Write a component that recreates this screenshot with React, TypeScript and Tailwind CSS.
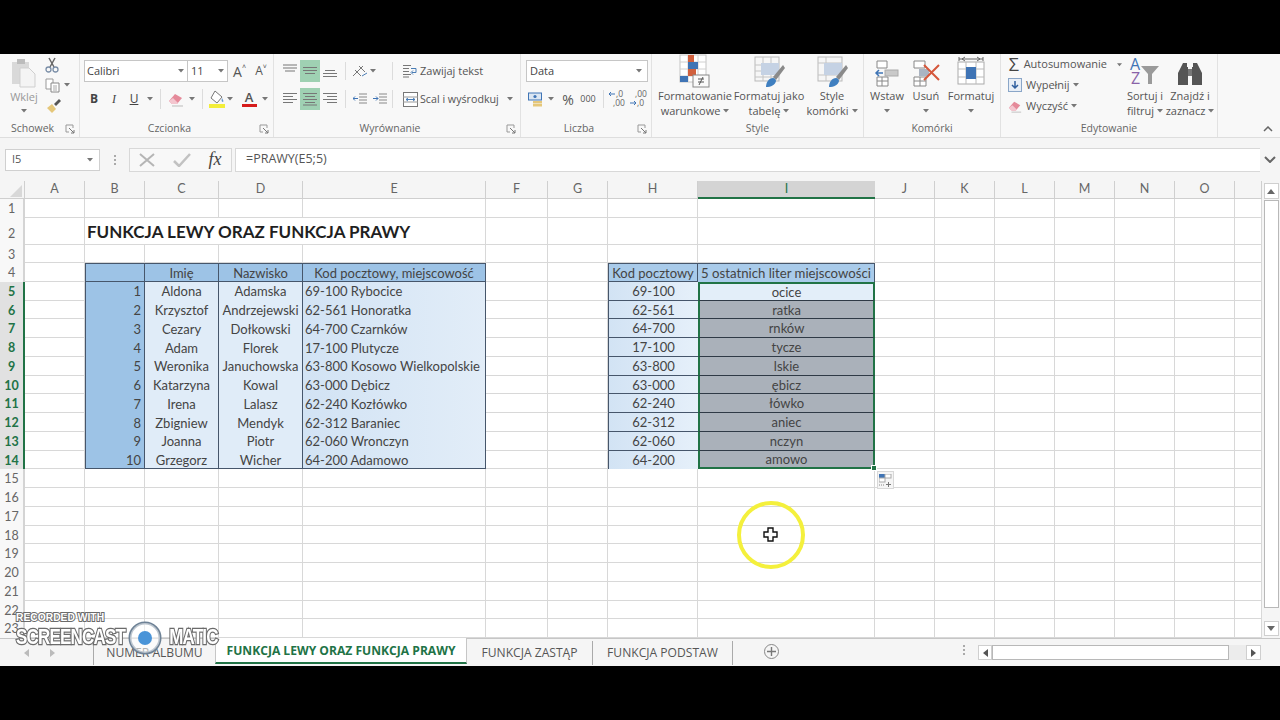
import type { ReactNode } from "react";

const gridCols =
  "grid-cols-[25px_60px_60px_74px_84px_183px_62px_60px_90px_177px_60px_60px_60px_60px_60px_60px_27px]";
const colNames = ["", "A", "B", "C", "D", "E", "F", "G", "H", "I", "J", "K", "L", "M", "N", "O", ""];

const people = [
  ["1", "Aldona", "Adamska", "69-100 Rybocice"],
  ["2", "Krzysztof", "Andrzejewski", "62-561 Honoratka"],
  ["3", "Cezary", "Dołkowski", "64-700 Czarnków"],
  ["4", "Adam", "Florek", "17-100 Plutycze"],
  ["5", "Weronika", "Januchowska", "63-800 Kosowo Wielkopolskie"],
  ["6", "Katarzyna", "Kowal", "63-000 Dębicz"],
  ["7", "Irena", "Lalasz", "62-240 Kozłówko"],
  ["8", "Zbigniew", "Mendyk", "62-312 Baraniec"],
  ["9", "Joanna", "Piotr", "62-060 Wronczyn"],
  ["10", "Grzegorz", "Wicher", "64-200 Adamowo"],
];
const codes = [
  ["69-100", "ocice"],
  ["62-561", "ratka"],
  ["64-700", "rnków"],
  ["17-100", "tycze"],
  ["63-800", "lskie"],
  ["63-000", "ębicz"],
  ["62-240", "łówko"],
  ["62-312", "aniec"],
  ["62-060", "nczyn"],
  ["64-200", "amowo"],
];

const plain = "border-r border-b border-[#d8d8d8] bg-white";
const dark = "border-[#46566b]";

function Caret({ className = "" }: { className?: string }) {
  return (
    <svg width="6" height="4" viewBox="0 0 6 4" className={className}>
      <path d="M0 0h6L3 3.5z" fill="#777" />
    </svg>
  );
}

function Launcher() {
  return (
    <svg width="10" height="10" viewBox="0 0 10 10">
      <path d="M1 1h7v3M1 1v7h3" fill="none" stroke="#999" />
      <path d="M4 4l5 5M9 6v3H6" fill="none" stroke="#777" />
    </svg>
  );
}

function Sep({ className = "h-[22px]" }: { className?: string }) {
  return <div className={`w-px bg-[#dcdcdc] ${className}`} />;
}

function Lines({ kind }: { kind: string }) {
  const rows: Record<string, string> = {
    top: "M0 1h14M0 4h14M2 7h10",
    mid: "M0 3.5h14M0 6.5h14M2 9.5h10",
    bottom: "M2 6.5h10M0 9.5h14M0 12.5h14",
    left: "M0 1.5h14M0 4.5h10M0 7.5h14M0 10.5h10",
    center: "M0 1.5h14M2 4.5h10M0 7.5h14M2 10.5h10M0 13h14",
    right: "M0 1.5h14M4 4.5h10M0 7.5h14M4 10.5h10",
  };
  return (
    <svg width="14" height="14" viewBox="0 0 14 14">
      <path d={rows[kind]} stroke="#777" fill="none" />
    </svg>
  );
}

function Slot({ className, children }: { className: string; children?: ReactNode }) {
  return <div className={`flex items-center justify-center ${className}`}>{children}</div>;
}

function Group({
  w,
  label,
  launcher,
  children,
}: {
  w: string;
  label: string;
  launcher?: boolean;
  children: ReactNode;
}) {
  return (
    <div className={`flex flex-col shrink-0 border-r border-[#e2e2e2] ${w}`}>
      <div className="h-[66px]">{children}</div>
      <div className="flex items-center h-[17px] pt-[1px] text-[10.5px] text-[#666]">
        <span className="flex-1 text-center">{label}</span>
        {launcher && (
          <span className="w-[14px] flex">
            <Launcher />
          </span>
        )}
      </div>
    </div>
  );
}

function Paste() {
  return (
    <svg width="26" height="30" viewBox="0 0 26 30">
      <rect x="1" y="4" width="17" height="22" fill="#d9d9d9" />
      <rect x="6" y="1" width="8" height="5" fill="#bcbcbc" />
      <path d="M9 10h9l6 6v13H9z" fill="#f4f4f4" stroke="#cfcfcf" />
    </svg>
  );
}

function Scissors() {
  return (
    <svg width="16" height="16" viewBox="0 0 16 16">
      <path d="M5 1l5 9M11 1L6 10" stroke="#666" strokeWidth="1.5" fill="none" />
      <circle cx="4.5" cy="12.5" r="2.5" fill="none" stroke="#7b8fa8" strokeWidth="1.3" />
      <circle cx="11.5" cy="12.5" r="2.5" fill="none" stroke="#7b8fa8" strokeWidth="1.3" />
    </svg>
  );
}

function Copy() {
  return (
    <svg width="15" height="15" viewBox="0 0 15 15">
      <path d="M1 1h7v10H1z" fill="#fff" stroke="#999" />
      <path d="M6 5h8v9H6z" fill="#fff" stroke="#888" />
      <path d="M8 8h4M8 10h4M8 12h4" stroke="#aaa" />
    </svg>
  );
}

function Brush() {
  return (
    <svg width="16" height="16" viewBox="0 0 16 16">
      <path d="M1 10l5-4 4 5-4 4z" fill="#e5c77a" />
      <path d="M8 6l5-5 2 2-5 5z" fill="#555" />
    </svg>
  );
}

function Eraser({ size = 16 }: { size?: number }) {
  return (
    <svg width={size} height={size} viewBox="0 0 16 16">
      <path d="M1 10l6-7 7 4-5 6H4z" fill="#e58a9a" />
      <path d="M1 10l3 3h5l1-1-5-5z" fill="#f4c6cf" />
      <path d="M4 15h11" stroke="#bbb" />
    </svg>
  );
}

function FillColor() {
  return (
    <svg width="16" height="18" viewBox="0 0 16 18">
      <path d="M6 1l7 6-5 6-6-5z" fill="#fff" stroke="#777" />
      <path d="M13 8c1 2 2 3 1 4-1 0-2-1-1-4z" fill="#6a9bd1" />
      <rect x="0" y="14" width="16" height="4" fill="#f3ee3a" />
    </svg>
  );
}

function WrapIcon() {
  return (
    <svg width="15" height="14" viewBox="0 0 15 14">
      <path d="M0 1.5h8M0 4.5h6M0 7.5h6M0 10.5h8M0 13h6" stroke="#777" />
      <path d="M8 4.5h5v4H9" stroke="#4a7db5" fill="none" />
      <path d="M10 6.5l-2 2 2 2" stroke="#4a7db5" fill="none" />
    </svg>
  );
}

function MergeIcon() {
  return (
    <svg width="15" height="15" viewBox="0 0 15 15">
      <rect x="0.5" y="0.5" width="14" height="14" fill="#fff" stroke="#777" />
      <path d="M0 5h15M0 10h15" stroke="#999" />
      <path d="M3 7.5h9M10 6l2 1.5L10 9M5 6L3 7.5 5 9" stroke="#4a7db5" fill="none" />
    </svg>
  );
}

function TableBrush({ cells }: { cells: string }) {
  return (
    <svg width="32" height="32" viewBox="0 0 32 32">
      <rect x="2" y="1" width="24" height="24" fill="#f6f6f6" stroke="#b9b9b9" />
      <path d={cells} stroke="#c4c4c4" fill="none" />
      <rect x="8" y="7" width="18" height="12" fill="#c5d2e4" />
      <path d="M30 9L20 21l3 3L32 12z" fill="#8a8a8a" />
      <path d="M13 31c0-5 3-9 7-9 2 0 3 2 3 3-1 4-5 6-10 6z" fill="#3f7fc0" />
    </svg>
  );
}

function CondFormat() {
  return (
    <svg width="32" height="34" viewBox="0 0 32 34">
      <rect x="1" y="1" width="26" height="27" fill="#fff" stroke="#c4c4c4" />
      <path d="M9 1v27M19 1v27M1 8h26M1 15h26M1 22h26" stroke="#d0d0d0" />
      <rect x="9" y="1" width="6" height="7" fill="#d1603d" />
      <rect x="9" y="8" width="10" height="7" fill="#3f74b5" />
      <rect x="9" y="15" width="8" height="7" fill="#d1603d" />
      <rect x="1" y="22" width="8" height="6" fill="#3f74b5" />
      <rect x="14" y="21" width="16" height="12" fill="#fafafa" stroke="#888" />
      <path d="M19 25h6M19 28h6M24 23l-4 8" stroke="#555" />
    </svg>
  );
}

function InsertCell() {
  return (
    <svg width="26" height="28" viewBox="0 0 26 28">
      <path d="M3 1h10v7H3zM3 17h11v9H3zM8 17v9M3 21h11" fill="#fff" stroke="#888" />
      <rect x="11" y="10" width="13" height="6" fill="#c9c9c9" stroke="#aaa" />
      <path d="M9 13H2M5 10l-3 3 3 3" stroke="#3f74b5" strokeWidth="1.5" fill="none" />
    </svg>
  );
}

function DeleteCell() {
  return (
    <svg width="30" height="28" viewBox="0 0 30 28">
      <path d="M3 1h11v7H3zM3 17h12v9H3zM9 17v9M3 21h12" fill="#fff" stroke="#888" />
      <rect x="8" y="9" width="10" height="7" fill="#aab4c2" />
      <path d="M13 5l15 15M28 5L13 20" stroke="#d5573b" strokeWidth="2" />
    </svg>
  );
}

function FormatCell() {
  return (
    <svg width="30" height="32" viewBox="0 0 30 32">
      <path d="M3 3h24M3 1v4M27 1v4M6 3l3-2M6 3l3 2M24 3l-3-2M24 3l-3 2" stroke="#666" fill="none" />
      <rect x="2" y="6" width="26" height="22" fill="#fff" stroke="#aaa" />
      <path d="M10 6v22M20 6v22M2 13h26M2 21h26" stroke="#bbb" />
      <rect x="10" y="11" width="10" height="12" fill="#3f74b5" />
    </svg>
  );
}

function SortIcon() {
  return (
    <svg width="32" height="34" viewBox="0 0 32 34">
      <text x="1" y="16" fontSize="16" fontFamily="Open Sans, sans-serif" fill="#3f74b5">
        A
      </text>
      <text x="2" y="30" fontSize="16" fontFamily="Open Sans, sans-serif" fill="#8a63a8">
        Z
      </text>
      <path d="M12 12h18l-7 8v10h-4V20z" fill="#9a9a9a" />
    </svg>
  );
}

function Binoculars() {
  return (
    <svg width="28" height="28" viewBox="0 0 28 28">
      <path d="M7 3h4v4h1v18H2V13zM21 3h-4v4h-1v18h10V13z" fill="#555" />
      <rect x="12" y="9" width="4" height="7" fill="#777" />
    </svg>
  );
}

function DecimalIcon({ more }: { more?: boolean }) {
  return (
    <svg width="20" height="20" viewBox="0 0 20 20">
      {more ? (
        <path d="M2 14h6M6 12l2 2-2 2" stroke="#3f74b5" fill="none" />
      ) : (
        <path d="M1 5h6M3 3L1 5l2 2" stroke="#3f74b5" fill="none" />
      )}
      <text x={more ? 7 : 8} y="8" fontSize="8.5" fontFamily="Open Sans, sans-serif" fill="#666">
        {more ? ",00" : ",0"}
      </text>
      <text x={more ? 9 : 5} y="17" fontSize="8.5" fontFamily="Open Sans, sans-serif" fill="#666">
        {more ? ",0" : ",00"}
      </text>
    </svg>
  );
}

function BigButton({
  w,
  icon,
  top,
  bottom,
}: {
  w: string;
  icon: ReactNode;
  top: string;
  bottom?: string;
}) {
  return (
    <div className={`flex flex-col items-center shrink-0 ${w}`}>
      <div className="h-[34px] flex items-end">{icon}</div>
      <div className="leading-[15px] text-[11px] text-[#555] whitespace-nowrap text-center">{top}</div>
      <div className="leading-[15px] text-[11px] text-[#555] whitespace-nowrap flex items-center gap-[3px] h-[15px]">
        {bottom}
        <Caret />
      </div>
    </div>
  );
}

function Ribbon() {
  return (
    <div className="flex h-[84px] bg-[#f8f8f8] border-b border-[#dedede] text-[#555] shrink-0">
      <Group w="w-[80px]" label="Schowek" launcher>
        <div className="flex pl-[9px]">
          <div className="w-[30px] flex flex-col items-center pt-[4px]">
            <Paste />
            <span className="text-[11px] text-[#999] mt-[1px] leading-[15px]">Wklej</span>
            <Caret className="mt-[5px]" />
          </div>
          <div className="flex flex-col ml-[4px] pt-[1px]">
            <Slot className="h-[19px] w-[18px]">
              <Scissors />
            </Slot>
            <div className="flex items-center h-[22px] gap-[3px]">
              <Slot className="w-[18px]">
                <Copy />
              </Slot>
              <Caret />
            </div>
            <Slot className="h-[20px] w-[22px]">
              <Brush />
            </Slot>
          </div>
        </div>
      </Group>

      <Group w="w-[194px]" label="Czcionka" launcher>
        <div className="pt-[6px] pl-[4px]">
          <div className="flex items-center h-[22px]">
            <div className="flex items-center justify-between w-[104px] h-full bg-white border border-[#c6c6c6] px-[2px] text-[11px] text-[#444]">
              Calibri
              <Caret className="mr-[1px]" />
            </div>
            <div className="flex items-center justify-between w-[40px] h-full bg-white border border-l-0 border-[#c6c6c6] px-[3px] text-[11px] text-[#444]">
              11
              <Caret />
            </div>
            <Slot className="w-[23px] text-[14px] text-[#555]">
              A<span className="text-[7px] mb-[8px]">˄</span>
            </Slot>
            <Slot className="w-[20px] text-[12px] text-[#555]">
              A<span className="text-[7px] mb-[7px]">˅</span>
            </Slot>
          </div>
          <div className="flex items-center h-[22px] mt-[6px] text-[12px] text-[#444]">
            <Slot className="w-[20px] font-bold">B</Slot>
            <Slot className="w-[20px] italic font-['Liberation_Serif',serif]">I</Slot>
            <Slot className="w-[20px] underline">U</Slot>
            <Slot className="w-[12px]">
              <Caret />
            </Slot>
            <Slot className="w-[8px]">
              <Sep className="h-[20px]" />
            </Slot>
            <Slot className="w-[24px]">
              <Eraser />
            </Slot>
            <Slot className="w-[8px]">
              <Caret />
            </Slot>
            <Slot className="w-[12px]">
              <Sep className="h-[20px]" />
            </Slot>
            <Slot className="w-[18px]">
              <FillColor />
            </Slot>
            <Slot className="w-[8px]">
              <Caret />
            </Slot>
            <div className="w-[26px] ml-[2px] flex flex-col items-center leading-[13px] text-[13px] font-semibold text-[#555]">
              A<div className="w-[15px] h-[3px] bg-[#d61c1c]" />
            </div>
            <Slot className="w-[6px]">
              <Caret />
            </Slot>
          </div>
        </div>
      </Group>

      <Group w="w-[247px]" label="Wyrównanie" launcher>
        <div className="pt-[6px] pl-[6px]">
          <div className="flex items-center h-[22px]">
            <Slot className="w-[20px] h-full">
              <Lines kind="top" />
            </Slot>
            <Slot className="w-[20px] h-full bg-[#9fd1b3]">
              <Lines kind="mid" />
            </Slot>
            <Slot className="w-[20px] h-full">
              <Lines kind="bottom" />
            </Slot>
            <Slot className="w-[10px]">
              <Sep className="h-[18px]" />
            </Slot>
            <Slot className="w-[20px] text-[12px] text-[#666]">
              <svg width="16" height="14" viewBox="0 0 16 14">
                <path d="M1 12L11 2M3 6l6 6M7 2l6 6" stroke="#777" fill="none" />
                <path d="M10 12l5-3" stroke="#4a7db5" />
              </svg>
            </Slot>
            <Slot className="w-[6px]">
              <Caret />
            </Slot>
            <Sep className="h-[18px] ml-[16px]" />
            <Slot className="w-[20px] ml-[7px]">
              <WrapIcon />
            </Slot>
            <span className="text-[11px] whitespace-nowrap">Zawijaj tekst</span>
          </div>
          <div className="flex items-center h-[22px] mt-[6px]">
            <Slot className="w-[20px] h-full">
              <Lines kind="left" />
            </Slot>
            <Slot className="w-[20px] h-full bg-[#9fd1b3]">
              <Lines kind="center" />
            </Slot>
            <Slot className="w-[20px] h-full">
              <Lines kind="right" />
            </Slot>
            <Slot className="w-[10px]">
              <Sep className="h-[18px]" />
            </Slot>
            <Slot className="w-[20px]">
              <svg width="14" height="12" viewBox="0 0 14 12">
                <path d="M6 1h8M6 4h8M6 7h8M6 10h8" stroke="#888" />
                <path d="M5 5.5H0M2 3.5l-2 2 2 2" stroke="#3f74b5" fill="none" />
              </svg>
            </Slot>
            <Slot className="w-[20px]">
              <svg width="14" height="12" viewBox="0 0 14 12">
                <path d="M6 1h8M6 4h8M6 7h8M6 10h8" stroke="#888" />
                <path d="M0 5.5h5M3 3.5l2 2-2 2" stroke="#3f74b5" fill="none" />
              </svg>
            </Slot>
            <Sep className="h-[18px] ml-[2px]" />
            <Slot className="w-[20px] ml-[7px]">
              <MergeIcon />
            </Slot>
            <span className="text-[10.7px] whitespace-nowrap">Scal i wyśrodkuj</span>
            <Caret className="ml-[8px]" />
          </div>
        </div>
      </Group>

      <Group w="w-[131px]" label="Liczba" launcher>
        <div className="pt-[6px] pl-[5px]">
          <div className="flex items-center justify-between w-[122px] h-[22px] bg-white border border-[#c6c6c6] px-[3px] text-[11px] text-[#444]">
            Data
            <Caret className="mr-[2px]" />
          </div>
          <div className="flex items-center h-[22px] mt-[6px] text-[#555]">
            <Slot className="w-[18px]">
              <svg width="15" height="15" viewBox="0 0 15 15">
                <rect x="0.5" y="1" width="13" height="7" fill="#dbe6f2" stroke="#3f74b5" />
                <circle cx="7" cy="4.5" r="1.6" fill="#3f74b5" />
                <rect x="5" y="9" width="9" height="2.5" fill="#e5c77a" />
                <rect x="5" y="12" width="9" height="2.5" fill="#e5c77a" />
              </svg>
            </Slot>
            <Slot className="w-[14px]">
              <Caret />
            </Slot>
            <Slot className="w-[20px] text-[14px]">%</Slot>
            <Slot className="w-[20px] text-[9px]">000</Slot>
            <Sep className="h-[18px] ml-[5px]" />
            <Slot className="w-[20px] ml-[4px]">
              <DecimalIcon />
            </Slot>
            <Slot className="w-[20px]">
              <DecimalIcon more />
            </Slot>
          </div>
        </div>
      </Group>

      <Group w="w-[212px]" label="Style">
        <div className="flex pl-[5px]">
          <BigButton w="w-[76px]" icon={<CondFormat />} top="Formatowanie" bottom="warunkowe" />
          <BigButton
            w="w-[72px]"
            icon={<TableBrush cells="M2 9h24M2 15h24M2 21h24M10 1v24M18 1v24" />}
            top="Formatuj jako"
            bottom="tabelę"
          />
          <BigButton
            w="w-[54px]"
            icon={<TableBrush cells="M2 7h24M10 1v24M2 19h24" />}
            top="Style"
            bottom="komórki"
          />
        </div>
      </Group>

      <Group w="w-[137px]" label="Komórki">
        <div className="flex">
          <BigButton w="w-[46px]" icon={<InsertCell />} top="Wstaw" />
          <BigButton w="w-[32px]" icon={<DeleteCell />} top="Usuń" />
          <BigButton w="w-[58px]" icon={<FormatCell />} top="Formatuj" />
        </div>
      </Group>

      <Group w="w-[217px]" label="Edytowanie">
        <div className="flex pl-[7px]">
          <div className="w-[114px] flex flex-col text-[11px] pt-[1px]">
            <div className="flex items-center h-[19px] gap-[3px]">
              <Slot className="w-[14px] text-[18px] text-[#444]">Σ</Slot>
              <span className="ml-[1px]">Autosumowanie</span>
              <Caret className="ml-[7px]" />
            </div>
            <div className="flex items-center h-[22px] gap-[3px]">
              <svg width="14" height="14" viewBox="0 0 14 14">
                <rect x="0.5" y="0.5" width="13" height="13" fill="#e8eef6" stroke="#8aa6c8" />
                <path d="M7 3v7M4 7l3 3 3-3" stroke="#2f5f9e" strokeWidth="1.5" fill="none" />
              </svg>
              <span className="ml-[1px]">Wypełnij</span>
              <Caret />
            </div>
            <div className="flex items-center h-[20px] gap-[3px]">
              <Eraser size={14} />
              <span className="ml-[1px]">Wyczyść</span>
              <Caret />
            </div>
          </div>
          <BigButton w="w-[46px]" icon={<SortIcon />} top="Sortuj i" bottom="filtruj" />
          <BigButton w="w-[44px]" icon={<Binoculars />} top="Znajdź i" bottom="zaznacz" />
        </div>
      </Group>

      <div className="flex-1 flex items-end justify-end pr-[7px] pb-[5px]">
        <svg width="10" height="6" viewBox="0 0 10 6">
          <path d="M1 5l4-4 4 4" stroke="#666" strokeWidth="1.5" fill="none" />
        </svg>
      </div>
    </div>
  );
}

function FormulaBar() {
  return (
    <div className="flex items-center h-[43px] bg-[#f5f5f5] pl-[5px] shrink-0">
      <div className="flex items-center justify-between w-[95px] h-[22px] bg-white border border-[#d0d0d0] px-[6px] text-[11px] text-[#555]">
        I5
        <Caret />
      </div>
      <div className="w-[29px] flex flex-col items-center gap-[2px]">
        <div className="w-[2px] h-[2px] bg-[#aaa]" />
        <div className="w-[2px] h-[2px] bg-[#aaa]" />
        <div className="w-[2px] h-[2px] bg-[#aaa]" />
      </div>
      <div className="flex items-center w-[103px] h-[24px] bg-[#f8f8f8] border border-[#d8d8d8]">
        <Slot className="w-[34px]">
          <svg width="16" height="14" viewBox="0 0 16 14">
            <path d="M1 1l14 12M15 1L1 13" stroke="#b5b5b5" strokeWidth="2" />
          </svg>
        </Slot>
        <Slot className="w-[36px]">
          <svg width="18" height="14" viewBox="0 0 18 14">
            <path d="M1 8l5 5L17 1" stroke="#c2c2c2" strokeWidth="2.5" fill="none" />
          </svg>
        </Slot>
        <Slot className="w-[30px] font-['Liberation_Serif',serif] italic text-[18px] text-[#444]">fx</Slot>
      </div>
      <div className="flex-1 ml-[3px] h-[24px] flex items-center bg-white border border-r-0 border-[#d8d8d8] pl-[10px] text-[12.5px] text-[#555]">
        =PRAWY(E5;5)
      </div>
      <Slot className="w-[20px]">
        <svg width="12" height="7" viewBox="0 0 12 7">
          <path d="M1 1l5 5 5-5" stroke="#666" strokeWidth="2" fill="none" />
        </svg>
      </Slot>
    </div>
  );
}

function ColumnHeaders() {
  return (
    <div className={`grid ${gridCols} grid-rows-1 h-[18px] shrink-0 text-[12.5px] text-[#666]`}>
      {colNames.map((name, i) =>
        i === 0 ? (
          <div key={i} className="flex items-end justify-end pr-[2px] pb-[1px] bg-[#f5f5f5] border-r border-b border-[#cfcfcf]">
            <svg width="12" height="12" viewBox="0 0 12 12">
              <path d="M12 0v12H0z" fill="#d8d8d8" />
            </svg>
          </div>
        ) : name === "I" ? (
          <div key={i} className="flex items-center justify-center bg-[#d4d4d4] border-b-2 border-[#217346] text-[#217346]">
            {name}
          </div>
        ) : (
          <div key={i} className="flex items-center justify-center bg-[#f5f5f5] border-r border-b border-[#cfcfcf]">
            {name}
          </div>
        ),
      )}
    </div>
  );
}

function TableCell({ r, c }: { r: number; c: number }) {
  const center = "flex items-center justify-center pt-[2px] whitespace-nowrap overflow-visible";
  if (r === 4) {
    if (c >= 2 && c <= 5) {
      const labels = ["", "Imię", "Nazwisko", "Kod pocztowy, miejscowość"];
      return (
        <div className={`${center} bg-[#9dc3e6] border-t border-b border-r ${dark} ${c === 2 ? "border-l" : ""}`}>
          {labels[c - 2]}
        </div>
      );
    }
    if (c === 8) {
      return <div className={`${center} bg-[#a9cbea] border-t border-b border-r border-l ${dark}`}>Kod pocztowy</div>;
    }
    if (c === 9) {
      return (
        <div className={`${center} bg-[#a9cbea] border-t border-r ${dark} text-[13.2px]`}>
          5 ostatnich liter miejscowości
        </div>
      );
    }
  }
  if (r >= 5 && r <= 14) {
    const row = people[r - 5];
    const code = codes[r - 5];
    const last = r === 14;
    if (c === 2) {
      return (
        <div className={`flex items-center justify-end pr-[3px] pt-[2px] bg-[#9dc3e6] border-l border-r ${dark} ${last ? "border-b" : ""}`}>
          {row[0]}
        </div>
      );
    }
    if (c === 3 || c === 4) {
      return (
        <div className={`${center} bg-[#e0ecf8] border-r ${dark} ${last ? "border-b" : ""}`}>{row[c - 2]}</div>
      );
    }
    if (c === 5) {
      return (
        <div className={`flex items-center pl-[2px] pt-[2px] whitespace-nowrap bg-gradient-to-r from-[#d2e3f4] to-[#e2edf8] border-r ${dark} ${last ? "border-b" : ""}`}>
          {row[3]}
        </div>
      );
    }
    if (c === 8) {
      return (
        <div className={`${center} bg-gradient-to-r from-[#d2e3f4] to-[#e6f0fa] border-l ${dark} ${last ? "" : "border-b"}`}>
          {code[0]}
        </div>
      );
    }
    if (c === 9) {
      return (
        <div
          className={`relative ${center} border-l-2 border-r-2 border-[#217346] ${r === 5 ? "bg-[#e3eef9] border-t-2" : "bg-[#aab1ba]"} ${last ? "border-b-2" : "border-b-[#2f3a46] border-b"}`}
        >
          {code[1]}
          {last && <div className="absolute right-[-4px] bottom-[-4px] w-[6px] h-[6px] bg-[#217346] border border-white" />}
        </div>
      );
    }
  }
  return <div className={plain} />;
}

function SheetRow({ r }: { r: number }) {
  const selected = r >= 5 && r <= 14;
  const height = r === 2 ? "h-[27px]" : r === 3 ? "h-[18.25px]" : "h-[18.75px]";
  return (
    <div className={`grid ${gridCols} grid-rows-1 ${height} shrink-0`}>
      <div
        className={
          selected
            ? "flex items-center justify-center pt-[2px] bg-[#e1e1e1] border-r-2 border-[#217346] text-[12.5px] font-bold text-[#217346]"
            : r === 2
              ? "flex items-end justify-center pb-[1px] bg-[#f8f8f8] border-r-2 border-[#d4d4d4] text-[12.5px] text-[#666]"
              : "flex items-center justify-center pt-[2px] bg-[#f8f8f8] border-r-2 border-[#d4d4d4] text-[12.5px] text-[#666]"
        }
      >
        {r}
      </div>
      {colNames.slice(1).map((_, i) => {
        const c = i + 1;
        if (r === 2 && c >= 3 && c <= 5) return null;
        if (r === 2 && c === 2) {
          return (
            <div
              key={c}
              className={`col-span-4 flex items-end pl-[2px] whitespace-nowrap font-bold text-[17px] leading-[24px] text-[#1f1f1f] ${plain}`}
            >
              FUNKCJA LEWY ORAZ FUNKCJA PRAWY
            </div>
          );
        }
        return <TableCell key={c} r={r} c={c} />;
      })}
    </div>
  );
}

function Sheet() {
  const rows = Array.from({ length: 23 }, (_, i) => i + 1);
  return (
    <div className="flex h-[457px] bg-white shrink-0">
      <div className="relative w-[1262px] overflow-hidden flex flex-col font-['Lato',sans-serif] text-[13px] text-[#444]">
        <ColumnHeaders />
        {rows.map((r) => (
          <SheetRow key={r} r={r} />
        ))}
        <div className="absolute left-[877px] top-[290px] w-[17px] h-[18px] flex items-center justify-center bg-[#f5f5f5] border border-[#d8d8d8]">
          <svg width="13" height="13" viewBox="0 0 13 13">
            <rect x="0" y="0" width="6" height="4" fill="#3f74b5" />
            <rect x="6" y="0" width="6" height="4" fill="#fff" stroke="#aaa" />
            <rect x="0" y="4" width="6" height="4" fill="#fff" stroke="#aaa" />
            <path d="M0 11h5" stroke="#888" strokeDasharray="1 1" />
            <path d="M7 10.5h5M9.5 8v5" stroke="#777" />
          </svg>
        </div>
        <div className="absolute left-[737px] top-[320px] w-[68px] h-[68px] rounded-full border-[4px] border-[#f4f03c] blur-[0.6px]" />
        <div className="absolute left-[763px] top-[346px]">
          <svg width="15" height="15" viewBox="0 0 15 15">
            <path d="M5 1h5v4h4v5h-4v4H5v-4H1V5h4z" fill="#fff" stroke="#111" strokeWidth="1.4" />
          </svg>
        </div>
      </div>
      <div className="w-[18px] flex flex-col items-center bg-[#f5f5f5] pt-[2px]">
        <div className="w-[15px] h-[16px] flex items-center justify-center bg-white border border-[#cfcfcf]">
          <svg width="8" height="5" viewBox="0 0 8 5">
            <path d="M4 0l4 5H0z" fill="#666" />
          </svg>
        </div>
        <div className="w-[15px] h-[408px] bg-white border border-[#b8b8b8] mt-[1px]" />
        <div className="flex-1" />
        <div className="w-[15px] h-[15px] mb-[2px] flex items-center justify-center bg-white border border-[#cfcfcf]">
          <svg width="8" height="5" viewBox="0 0 8 5">
            <path d="M0 0h8L4 5z" fill="#666" />
          </svg>
        </div>
      </div>
    </div>
  );
}

function TabBar() {
  const tab = "flex items-center justify-center h-[24px] mt-[2px] border-r border-[#aaa] text-[#555] whitespace-nowrap";
  return (
    <div className="flex h-[28px] bg-[#f5f5f5] border-t border-[#c6c6c6] text-[12.1px] shrink-0">
      <div className="w-[94px] flex items-center pl-[24px] gap-[21px] h-[24px] mt-[2px] border-r border-[#aaa]">
        <svg width="5" height="8" viewBox="0 0 5 8">
          <path d="M5 0v8L0 4z" fill="#bbb" />
        </svg>
        <svg width="5" height="8" viewBox="0 0 5 8">
          <path d="M0 0v8l5-4z" fill="#bbb" />
        </svg>
      </div>
      <div className={`${tab} w-[121px] border-r-0`}>NUMER ALBUMU</div>
      <div className="flex items-center justify-center w-[252px] h-[26px] -mt-px pt-[2px] bg-white border-x border-b-2 border-x-[#c6c6c6] border-b-[#217346] font-bold text-[#217346] whitespace-nowrap">
        FUNKCJA LEWY ORAZ FUNKCJA PRAWY
      </div>
      <div className={`${tab} w-[126px]`}>FUNKCJA ZASTĄP</div>
      <div className={`${tab} w-[140px]`}>FUNKCJA PODSTAW</div>
      <div className="ml-[31px] mt-[5px] w-[15px] h-[15px] rounded-full border border-[#888] flex items-center justify-center">
        <svg width="9" height="9" viewBox="0 0 9 9">
          <path d="M4.5 0v9M0 4.5h9" stroke="#777" strokeWidth="1.4" />
        </svg>
      </div>
      <div className="ml-[184px] mt-[6px] flex flex-col gap-[2px]">
        <div className="w-[2px] h-[2px] bg-[#aaa]" />
        <div className="w-[2px] h-[2px] bg-[#aaa]" />
        <div className="w-[2px] h-[2px] bg-[#aaa]" />
      </div>
      <div className="ml-[13px] mt-[6px] w-[283px] h-[15px] flex">
        <div className="w-[14px] flex items-center justify-center bg-white border border-[#cfcfcf]">
          <svg width="5" height="8" viewBox="0 0 5 8">
            <path d="M5 0v8L0 4z" fill="#555" />
          </svg>
        </div>
        <div className="w-[237px] bg-white border border-[#b8b8b8]" />
        <div className="flex-1 bg-[#ececec]" />
        <div className="w-[15px] flex items-center justify-center bg-white border border-[#cfcfcf]">
          <svg width="5" height="8" viewBox="0 0 5 8">
            <path d="M0 0v8l5-4z" fill="#555" />
          </svg>
        </div>
      </div>
    </div>
  );
}

function Watermark() {
  const outline =
    "text-white font-bold font-['Liberation_Sans',sans-serif] [-webkit-text-stroke:2px_#6b6b6b] [paint-order:stroke_fill]";
  return (
    <div className="absolute left-[16px] top-[611px] flex flex-col">
      <div className={`${outline} text-[10.3px] leading-[13px]`}>RECORDED WITH</div>
      <div className={`flex items-center h-[34px] -mt-[3px] ${outline} text-[17px] tracking-[-0.8px]`}>
        <span className="inline-block scale-y-[1.25]">SCREENCAST</span>
        <svg width="34" height="34" viewBox="0 0 34 34" className="ml-[3px] mr-[7px]">
          <circle cx="17" cy="17" r="15" fill="#ffffff" fillOpacity="0.55" stroke="#6e8296" strokeWidth="3" />
          <circle cx="17" cy="17" r="7" fill="#4a94d8" />
        </svg>
        <span className="inline-block scale-y-[1.25]">MATIC</span>
      </div>
    </div>
  );
}

export default function App() {
  return (
    <div className="relative w-[1280px] h-[720px] bg-black overflow-hidden py-[54px] font-['Open_Sans',sans-serif]">
      <Ribbon />
      <FormulaBar />
      <Sheet />
      <TabBar />
      <Watermark />
    </div>
  );
}
